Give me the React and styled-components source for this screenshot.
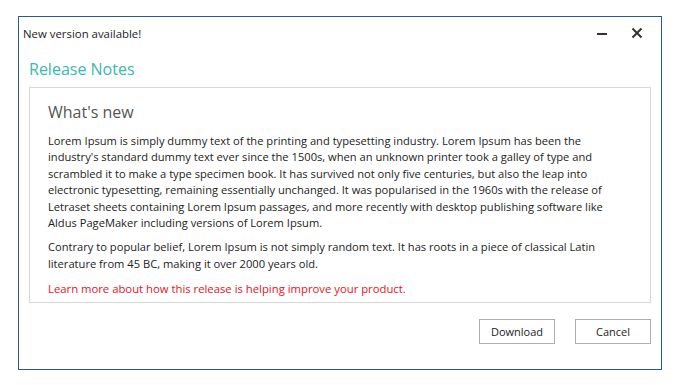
import React from "react";
import styled, { createGlobalStyle } from "styled-components";

const GlobalStyle = createGlobalStyle`
  body {
    margin: 0;
    background: #ffffff;
    font-family: "Open Sans", "Noto Sans", sans-serif;
  }
`;

function App() {
  return (
    <Page>
      <GlobalStyle />
      <Window>
        <TitleBar>
          <Title>New version available!</Title>
          <Controls>
            <ControlButton aria-label="Minimize">
              <svg width="12" height="12" viewBox="0 0 12 12">
                <rect x="1" y="6" width="10" height="2" fill="#333" />
              </svg>
            </ControlButton>
            <ControlButton aria-label="Close">
              <svg width="12" height="12" viewBox="0 0 12 12">
                <path d="M1.5 1.5 L10.5 10.5 M10.5 1.5 L1.5 10.5" stroke="#333" strokeWidth="2" />
              </svg>
            </ControlButton>
          </Controls>
        </TitleBar>
        <Body>
          <Heading>Release Notes</Heading>
          <NotesBox>
            <SubHeading>What's new</SubHeading>
            <Paragraph>
              Lorem Ipsum is simply dummy text of the printing and typesetting industry. Lorem Ipsum has been the
              <br />
              industry's standard dummy text ever since the 1500s, when an unknown printer took a galley of type and
              <br />
              scrambled it to make a type specimen book. It has survived not only five centuries, but also the leap into
              <br />
              electronic typesetting, remaining essentially unchanged. It was popularised in the 1960s with the release of
              <br />
              Letraset sheets containing Lorem Ipsum passages, and more recently with desktop publishing software like
              <br />
              Aldus PageMaker including versions of Lorem Ipsum.
            </Paragraph>
            <Paragraph>
              Contrary to popular belief, Lorem Ipsum is not simply random text. It has roots in a piece of classical Latin
              <br />
              literature from 45 BC, making it over 2000 years old.
            </Paragraph>
            <LearnMore>Learn more about how this release is helping improve your product.</LearnMore>
          </NotesBox>
          <Actions>
            <Button>Download</Button>
            <Button>Cancel</Button>
          </Actions>
        </Body>
      </Window>
    </Page>
  );
}

export default App;

const Page = styled.div`
  padding: 16px 0 0 18px;
`;

const Window = styled.div`
  width: 642px;
  height: 352px;
  border: 1px solid #2b5797;
  background: #fff;
  display: flex;
  flex-direction: column;
`;

const TitleBar = styled.div`
  height: 32px;
  display: flex;
  align-items: center;
  justify-content: space-between;
  padding: 0 0 0 4px;
`;

const Title = styled.div`
  font-size: 11.4px;
  color: #222;
`;

const Controls = styled.div`
  display: flex;
  align-items: center;
  gap: 23px;
  padding-right: 18px;
`;

const ControlButton = styled.div`
  width: 12px;
  height: 12px;
  display: flex;
  align-items: center;
  justify-content: center;
`;

const Body = styled.div`
  padding: 0 10px;
  display: flex;
  flex-direction: column;
`;

const Heading = styled.h1`
  margin: 9px 0 0;
  font-size: 16px;
  font-weight: 400;
  line-height: 22px;
  color: #39b8b1;
`;

const NotesBox = styled.div`
  margin-top: 7px;
  height: 216px;
  box-sizing: border-box;
  border: 1px solid #d6d6d6;
  padding: 13px 18px 0;
`;

const SubHeading = styled.h2`
  margin: 0 0 10px;
  font-size: 16px;
  font-weight: 400;
  line-height: 22px;
  color: #555;
`;

const Paragraph = styled.p`
  margin: 0 0 8px;
  font-size: 11.15px;
  line-height: 16.4px;
  color: #222;
  white-space: nowrap;
`;

const LearnMore = styled.p`
  margin: 9px 0 0;
  font-size: 11.3px;
  line-height: 16.4px;
  color: #e81123;
`;

const Actions = styled.div`
  display: flex;
  justify-content: flex-end;
  gap: 20px;
  margin-top: 16px;
`;

const Button = styled.button`
  width: 76px;
  height: 25px;
  border: 1px solid #adadad;
  background: #fff;
  font-family: "Open Sans", "Noto Sans", sans-serif;
  font-size: 11px;
  color: #222;
  padding: 0;
`;
